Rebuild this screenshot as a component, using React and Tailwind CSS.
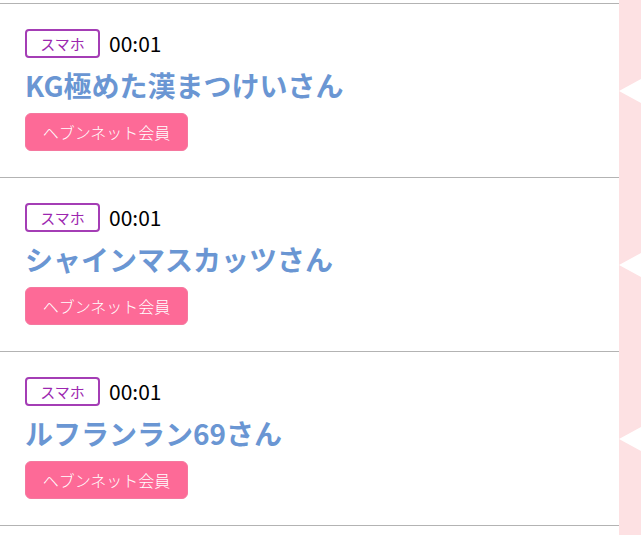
const rows = [
  { device: 'スマホ', time: '00:01', name: 'KG極めた漢まつけいさん' },
  { device: 'スマホ', time: '00:01', name: 'シャインマスカッツさん' },
  { device: 'スマホ', time: '00:01', name: 'ルフランラン69さん' },
];

const Notch = () => (
  <svg width="22" height="26" viewBox="0 0 22 26" className="block">
    <polygon points="0,13 22,1 22,25" fill="#ffffff" />
  </svg>
);

export default function App() {
  return (
    <div
      className="w-[641px] h-[535px] overflow-hidden flex bg-[#fde1e3]"
      style={{ fontFamily: '"Noto Sans CJK JP", "Noto Sans", sans-serif' }}
    >
      <div className="w-[619px] h-full bg-white pt-[3px]">
        <div className="border-t border-[#b3b3b3]">
          {rows.map((r, i) => (
            <div key={i} className="h-[174px] border-b border-[#b3b3b3] pl-[25px] pt-[25px]">
              <div className="flex items-center h-[29px]">
                <span className="h-[29px] w-[75px] flex items-center justify-center rounded-[4px] border-2 border-[#a43db5] text-[#9c27b0] text-[15px] leading-none">
                  {r.device}
                </span>
                <span className="ml-[9px] text-[21px] text-black leading-none">{r.time}</span>
              </div>
              <div className="mt-[9px] h-[36px] leading-[36px] text-[28px] font-bold text-[#6a96d3] whitespace-nowrap">
                {r.name}
              </div>
              <div className="mt-[10px] h-[38px] w-[163px] rounded-[6px] bg-[#fd6a97] border border-[#f5789f] flex items-center justify-center text-white text-[16px] leading-none font-light">
                ヘブンネット会員
              </div>
            </div>
          ))}
        </div>
      </div>
      <div className="flex-1 flex flex-col pt-[4px]">
        {rows.map((r, i) => (
          <div key={i} className="h-[174px] flex items-center">
            <Notch />
          </div>
        ))}
      </div>
    </div>
  );
}
